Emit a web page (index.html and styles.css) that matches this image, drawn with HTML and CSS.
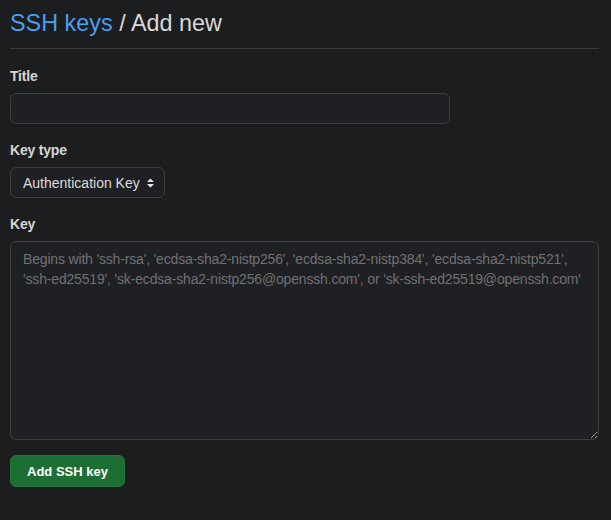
FILE: index.html
```html
<!DOCTYPE html>
<html>
<head>
<meta charset="utf-8">
<link rel="stylesheet" href="styles.css">
</head>
<body>
<div class="page">
  <div class="subhead">
    <h2 class="subhead-title"><a class="crumb" href="#">SSH keys</a> / Add new</h2>
  </div>
  <form class="form">
    <div class="group">
      <label class="label" for="title">Title</label>
      <input class="input title-input" id="title" type="text">
    </div>
    <div class="group">
      <label class="label" for="type">Key type</label>
      <div class="select">
        <span class="select-text">Authentication Key</span>
        <svg class="select-arrows" width="9" height="12" viewBox="0 0 9 12"><path d="M4.5 1.5 L8 5 H1 Z M1 7 H8 L4.5 10.5 Z" fill="#e6e6e6"/></svg>
      </div>
    </div>
    <div class="group group-last">
      <label class="label" for="key">Key</label>
      <textarea class="input textarea" id="key" placeholder="Begins with 'ssh-rsa', 'ecdsa-sha2-nistp256', 'ecdsa-sha2-nistp384', 'ecdsa-sha2-nistp521', 'ssh-ed25519', 'sk-ecdsa-sha2-nistp256@openssh.com', or 'sk-ssh-ed25519@openssh.com'"></textarea>
    </div>
    <div class="actions">
      <button class="btn-primary" type="button">Add SSH key</button>
    </div>
  </form>
</div>
</body>
</html>
```
FILE: styles.css
```css
html, body {
  margin: 0;
  padding: 0;
  background: #1c1d1f;
}
body {
  font-family: "Liberation Sans", Arial, sans-serif;
  color: #d6d6d6;
  font-size: 14px;
}
.page {
  padding: 0 12px 0 10px;
}
.subhead {
  border-bottom: 1px solid #3b3c3f;
  padding: 8px 0 10px;
}
.subhead-title {
  margin: 0;
  font-size: 23.4px;
  font-weight: 400;
  line-height: 30px;
  color: #d8d8d8;
}
.crumb {
  color: #4a9ff0;
  text-decoration: none;
}
.form {
  display: flex;
  flex-direction: column;
  padding-top: 17px;
}
.group {
  display: flex;
  flex-direction: column;
  align-items: flex-start;
  margin-bottom: 16px;
}
.group-last {
  margin-bottom: 15px;
}
.label {
  font-weight: 700;
  font-size: 14px;
  line-height: 20px;
  color: #d6d6d6;
  margin-bottom: 7px;
  letter-spacing: -0.2px;
}
.input {
  box-sizing: border-box;
  background: #1f2023;
  border: 1px solid #3c3d41;
  border-radius: 6px;
  color: #d6d6d6;
  font-family: inherit;
  font-size: 14px;
  outline: none;
}
.title-input {
  width: 440px;
  height: 31px;
  padding: 5px 12px;
}
.select {
  box-sizing: border-box;
  height: 31px;
  width: 155px;
  border: 1px solid #3c3d41;
  border-radius: 6px;
  background: #1f2023;
  display: flex;
  align-items: center;
  justify-content: space-between;
  padding: 0 9px 0 12px;
  color: #dcdcdc;
}
.select-text {
  font-size: 14px;
}
.textarea {
  width: 100%;
  height: 199px;
  padding: 7px 8px 8px 12px;
  line-height: 20px;
  font-size: 14px;
  letter-spacing: -0.17px;
  resize: vertical;
}
.textarea::placeholder {
  color: #707174;
}
.actions {
  display: flex;
}
.btn-primary {
  box-sizing: border-box;
  height: 32px;
  width: 115px;
  background: #1d6e33;
  border: 1px solid #1f7436;
  border-radius: 6px;
  color: #ffffff;
  font-family: inherit;
  font-weight: 700;
  font-size: 13px;
  cursor: pointer;
}
```
